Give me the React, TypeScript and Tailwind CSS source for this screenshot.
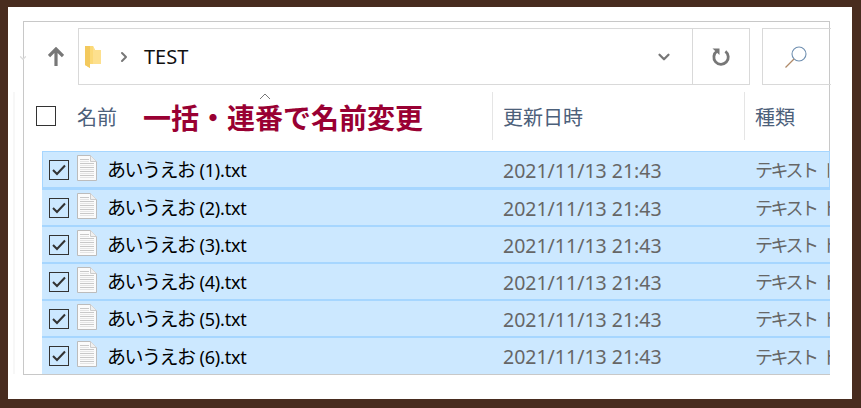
import { ChevronRight, ChevronDown } from 'lucide-react';

const files = ['(1)', '(2)', '(3)', '(4)', '(5)', '(6)'];

function FileIcon() {
  return (
    <svg width="20" height="26" viewBox="0 0 20 26" className="shrink-0">
      <path d="M0.5 0.5H13.5L19.5 6.5V25.5H0.5Z" fill="#fbfbfb" stroke="#bcbcbc" />
      <path d="M13.5 0.5V6.5H19.5" fill="#f0f0f0" stroke="#cccccc" />
      {[4, 6, 8, 10, 12, 14, 16, 18, 20, 22].map((y) => (
        <path key={y} d={`M3 ${y + 0.5}H${y < 8 ? 12 : 17}`} stroke={y % 4 === 0 ? '#c8c8c8' : '#e4e4e4'} />
      ))}
    </svg>
  );
}

function Check() {
  return (
    <div className="w-5 h-5 border border-[#333] flex items-center justify-center shrink-0">
      <svg width="14" height="12" viewBox="0 0 14 12">
        <path d="M1 6L5 10L13 1.5" fill="none" stroke="#333" strokeWidth="2" />
      </svg>
    </div>
  );
}

export default function App() {
  return (
    <div className="w-[861px] h-[408px] bg-[#482c1f] pt-[7px] pl-[8px] pr-[9px] pb-[9px] font-['Noto_Sans','Noto_Sans_CJK_JP',sans-serif] overflow-hidden">
      <div className="w-full h-full bg-white pt-[14px] pl-[5px] flex items-start">
        <div className="w-[2px] h-[282px] mt-[71px] bg-[#f7f7f7] shrink-0" />
        <div className="relative ml-[8px] w-[807px] h-[354px] border border-[#c8c8c8] shrink-0">
          <ChevronDown className="absolute left-[-6px] top-[31px] text-[#dcdcdc]" size={10} strokeWidth={3} />

          <div className="flex pt-[6px] h-[63px]">
            <div className="w-[54px] flex items-center justify-center pl-[10px] shrink-0">
              <svg width="16" height="20" viewBox="0 0 16 20">
                <path d="M8 19V2M1 9L8 2L15 9" fill="none" stroke="#777" strokeWidth="3.2" />
              </svg>
            </div>
            <div className="w-[672px] h-[57px] border border-[#d9d9d9] flex items-center shrink-0">
              <svg width="17" height="24" viewBox="0 0 17 24" className="ml-[6px] shrink-0">
                <path d="M0 1H8L10 5H16V19H5L5 23L0 20Z" fill="#fbd977" />
                <path d="M0 1H5V23L0 20Z" fill="#f3c95d" />
                <path d="M8 1L10 5H16V19H8Z" fill="#fde08e" />
              </svg>
              <ChevronRight className="ml-[14px] text-[#777]" size={16} strokeWidth={3} />
              <span className="ml-[12px] text-[20px] text-[#111] leading-none">TEST</span>
              <div className="flex-1" />
              <div className="w-[57px] h-full flex items-center justify-center">
                <ChevronDown className="text-[#777]" size={18} strokeWidth={3} />
              </div>
              <div className="w-[57px] h-full border-l border-[#d9d9d9] flex items-center justify-center">
                <svg width="18" height="18" viewBox="0 0 18 18">
                  <path d="M5 3.2A7.2 7.2 0 1 0 13.4 3.4" fill="none" stroke="#777" strokeWidth="2.8" />
                  <path d="M0.5 0.5H7.5V7Z" fill="#777" />
                </svg>
              </div>
            </div>
            <div className="ml-[12px] w-[69px] h-[57px] border border-[#d9d9d9] border-r-0 flex items-center justify-center shrink-0 pr-[2px]">
              <svg width="24" height="24" viewBox="0 0 24 24">
                <circle cx="15" cy="9" r="7" fill="none" stroke="#6f8fb0" strokeWidth="1.1" />
                <path d="M10 14L1.5 22.5" stroke="#b08a68" strokeWidth="1.3" />
              </svg>
            </div>
          </div>

          <div className="relative flex h-[66px] pt-[7px] items-start">
            <div className="pl-[12px] w-[53px] pt-[14px] shrink-0">
              <div className="w-5 h-5 border border-[#333]" />
            </div>
            <div className="w-[415px] h-[48px] pt-[3px] flex items-center gap-[26px] shrink-0">
              <span className="text-[20px] text-[#4c607a] leading-none">名前</span>
              <span className="text-[28px] font-bold text-[#990033] leading-none">一括・連番で名前変更</span>
            </div>
            <svg width="12" height="7" viewBox="0 0 12 7" className="absolute left-[235px] top-[8px]">
              <path d="M1 6L6 1L11 6" fill="none" stroke="#777" />
            </svg>
            <div className="w-[252px] h-[48px] pt-[4px] border-l border-[#e5e5e5] pl-[10px] flex items-center shrink-0">
              <span className="text-[20px] text-[#4c607a] leading-none">更新日時</span>
            </div>
            <div className="h-[48px] pt-[4px] flex-1 border-l border-[#e5e5e5] pl-[10px] flex items-center">
              <span className="text-[20px] text-[#4c607a] leading-none">種類</span>
            </div>
          </div>

          <div className="ml-[18px] mr-[-1px]">
            {files.map((n, i) => (
              <div
                key={n}
                className={`bg-[#cce8ff] flex items-center border-[#a6d6ff] overflow-hidden ${i === 0 ? 'border' : 'border-t-2'} ${i === 5 ? 'h-[38px]' : 'h-[37px]'}`}
              >
                <div className={`flex items-center w-full ${i === 0 ? 'ml-[6px]' : 'ml-[7px]'}`}>
                  <Check />
                  <div className="ml-[8px] -mt-[4px]">
                    <FileIcon />
                  </div>
                  <div className="ml-[10px] pt-[2px] w-[396px] text-black whitespace-nowrap shrink-0 flex items-baseline">
                    <span className="text-[19px] tracking-[-1.5px]">あいうえお</span>
                    <span className="ml-[5px] text-[18px] tracking-[-0.2px]">{n}.txt</span>
                  </div>
                  <span className="w-[252px] pt-[2px] text-[19.5px] text-[#666] whitespace-nowrap shrink-0">2021/11/13 21:43</span>
                  <span className="pt-[2px] text-[18px] tracking-[-2.5px] text-[#666] whitespace-nowrap">テキスト<span className="ml-[6px]">ド</span></span>
                </div>
              </div>
            ))}
          </div>
        </div>
      </div>
    </div>
  );
}
